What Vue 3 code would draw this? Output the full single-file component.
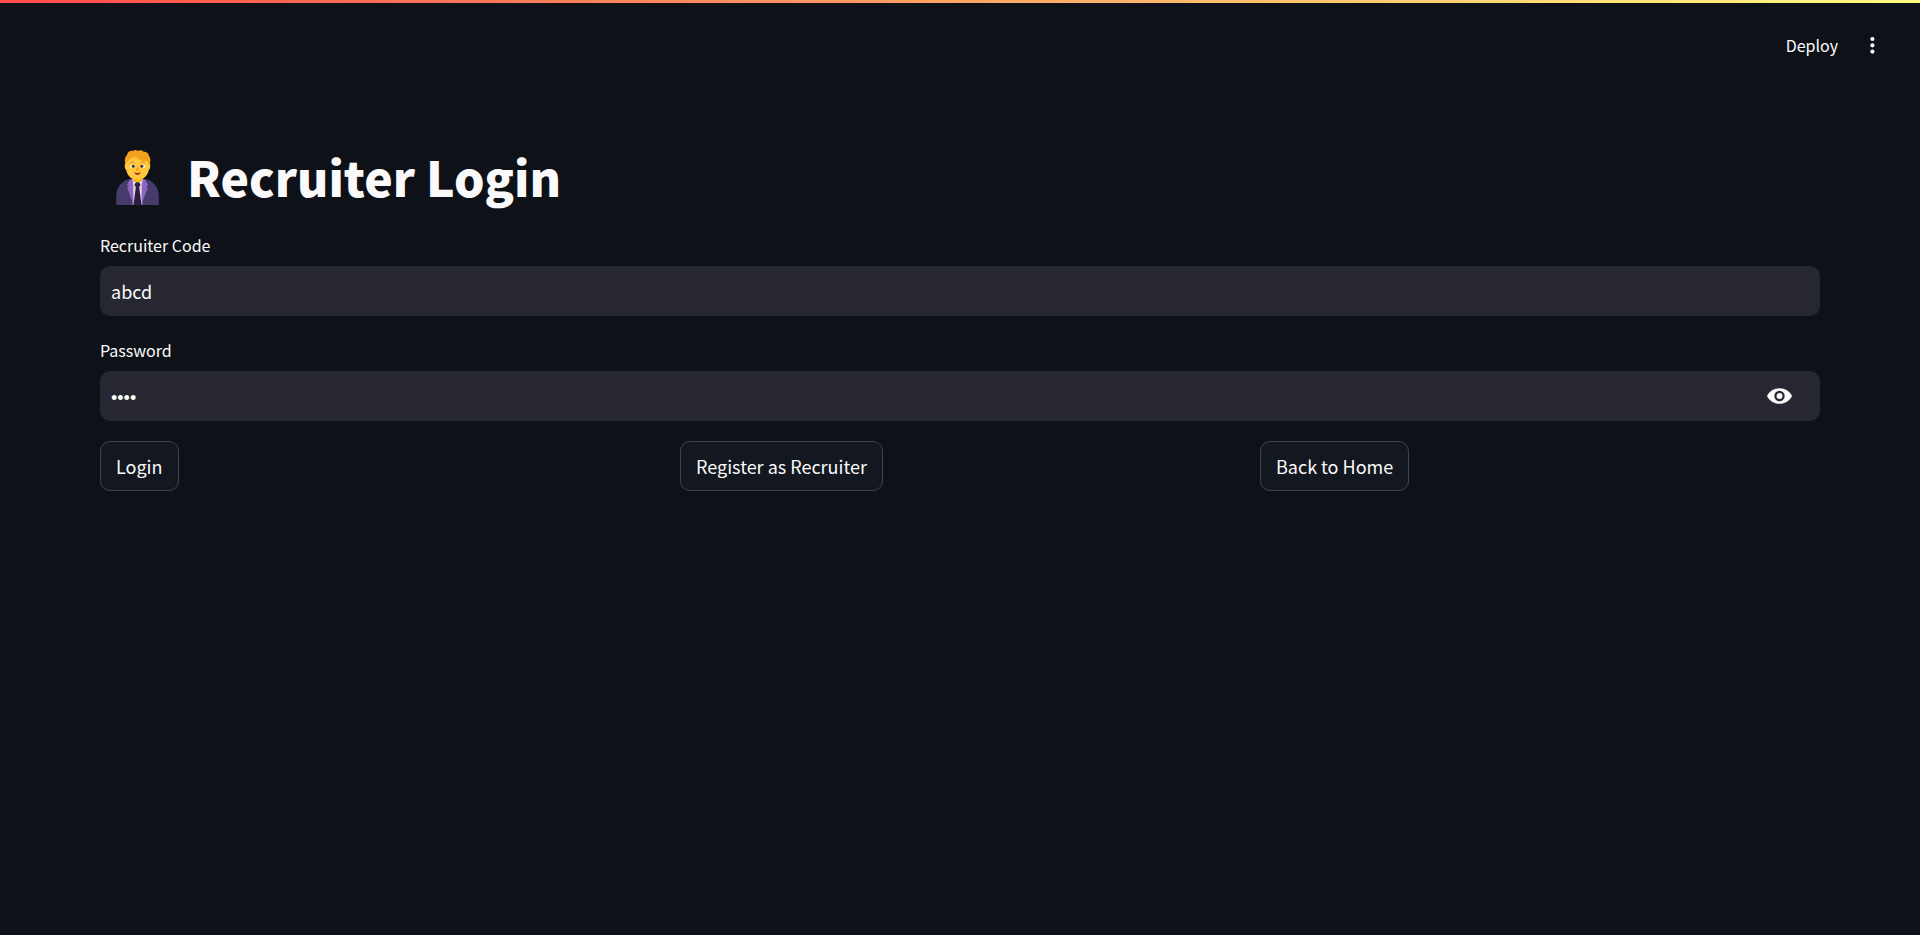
<script setup>
import { ref } from 'vue'

const code = ref('abcd')
const password = ref('abcd')
const visible = ref(false)
</script>

<template>
  <div class="app">
    <div class="decoration"></div>
    <header class="toolbar">
      <button class="deploy" type="button">Deploy</button>
      <button class="menu" type="button" aria-label="Main menu">
        <svg width="20" height="20" viewBox="0 0 20 20" fill="currentColor">
          <circle cx="10.4" cy="4" r="2.1" />
          <circle cx="10.4" cy="10.3" r="2.1" />
          <circle cx="10.4" cy="16.6" r="2.1" />
        </svg>
      </button>
    </header>

    <main class="content">
      <h1 class="title">
        <svg class="emoji" width="43" height="55" viewBox="64 45 128 165" aria-hidden="true">
          <path d="M64 210V184C64 154 84 134 108 132H148C172 134 192 154 192 184V210Z" fill="#463b6b" />
          <path d="M112 131L128 146L145 131L142 210H114Z" fill="#dcd9df" />
          <path d="M112 130L103 137L96 151L102 153L97 158L113 200L115 210H116L115 150Z" fill="#8d65c5" />
          <path d="M144 130L153 137L160 151L154 153L159 158L143 200L141 210H140L141 150Z" fill="#8d65c5" />
          <path d="M114 121H142V133C139 145 117 145 114 133Z" fill="#ffb400" />
          <path d="M121 145L124 143H132L135 145L137 151L133 156L140 210H116L123 156L119 151Z" fill="#321b41" />
          <path d="M93 84C88 84 89 104 94 104C96 119 108 134 128 134C148 134 160 119 162 104C167 104 168 84 163 84V78C160 65 150 57 128 57C106 57 96 65 93 78Z" fill="#ffc83d" />
          <path d="M93 91C88 80 89 66 97 60C97 51 107 46 114 48C119 44 125 45 129 48C135 44 142 45 146 50C155 49 162 55 162 62C168 70 168 82 163 91C162 83 160 79 155 77C142 80 132 76 125 67C111 65 96 75 93 91Z" fill="#f3a01f" />
          <path d="M128 95L123 106Q128 110 133 106Z" fill="#f49b16" />
          <path d="M107 83Q112 79 118 82M138 82Q144 79 149 83" fill="none" stroke="#d67d3b" stroke-width="2.5" stroke-linecap="round" />
          <ellipse cx="113" cy="94" rx="8" ry="5" fill="#fff" />
          <ellipse cx="143" cy="94" rx="8" ry="5" fill="#fff" />
          <circle cx="115" cy="94" r="4.5" fill="#402a32" />
          <circle cx="141" cy="94" r="4.5" fill="#402a32" />
          <path d="M118 112Q128 116 138 112Q136 120 128 120Q120 120 118 112Z" fill="#bc1e2d" />
        </svg>
        <span>Recruiter Login</span>
      </h1>

      <form class="form" @submit.prevent>
        <div class="field">
          <label for="code">Recruiter Code</label>
          <div class="control">
            <input id="code" v-model="code" type="text" autocomplete="off" />
          </div>
        </div>
        <div class="field">
          <label for="password">Password</label>
          <div class="control">
            <input id="password" v-model="password" :type="visible ? 'text' : 'password'" autocomplete="off" />
            <button class="reveal" type="button" aria-label="Show password" @click="visible = !visible">
              <svg width="25" height="16" viewBox="0 0 25 16">
                <path d="M0 8C2.2 3.2 7 .2 12.5 .2S22.8 3.2 25 8C22.8 12.8 18 15.8 12.5 15.8S2.2 12.8 0 8Z" fill="#fafafa" />
                <circle cx="12.5" cy="8" r="4.1" fill="none" stroke="#262730" stroke-width="2.2" />
              </svg>
            </button>
          </div>
        </div>
        <div class="actions">
          <div><button class="action" type="submit">Login</button></div>
          <div><button class="action" type="button">Register as Recruiter</button></div>
          <div><button class="action" type="button">Back to Home</button></div>
        </div>
      </form>
    </main>
  </div>
</template>

<style>
body {
  margin: 0;
  background: #0e1117;
}
</style>

<style scoped>
.app {
  min-height: 100vh;
  background: #0e1117;
  color: #fafafa;
  font-family: "Noto Sans CJK SC", "Noto Sans", sans-serif;
}

.app * {
  box-sizing: border-box;
}

.decoration {
  height: 3px;
  background: linear-gradient(90deg, #ff4b4b, #fffd80);
}

.toolbar {
  display: flex;
  align-items: center;
  justify-content: flex-end;
  gap: 24px;
  height: 84px;
  padding: 0 38px 0 0;
}

button {
  border: 0;
  padding: 0;
  background: none;
  color: inherit;
  font-family: inherit;
  cursor: pointer;
}

svg {
  display: block;
}

.deploy {
  font-size: 16px;
  line-height: 24px;
}

.content {
  padding: 51px 100px 0;
}

.title {
  display: flex;
  align-items: center;
  gap: 28px;
  height: 78px;
  margin: 0;
  padding-left: 16px;
  font-size: 48px;
  line-height: 72px;
  font-weight: 900;
}

.title span {
  padding-bottom: 2px;
}

.form {
  display: flex;
  flex-direction: column;
  gap: 20px;
  padding-top: 15px;
}

.field label {
  display: block;
  height: 35px;
  font-size: 16px;
  line-height: 28px;
}

.control {
  display: flex;
  height: 50px;
  border-radius: 10px;
  background: #262730;
}

.control input {
  flex: 1;
  min-width: 0;
  border: 0;
  outline: 0;
  padding: 0 11px;
  background: transparent;
  color: inherit;
  font-family: inherit;
  font-size: 18px;
}

.control input[type="password"] {
  padding-top: 4px;
  font-family: "Liberation Sans", sans-serif;
}

.reveal {
  padding: 0 28px;
}

.actions {
  display: grid;
  grid-template-columns: repeat(3, 1fr);
  gap: 20px;
}

.action {
  height: 50px;
  padding: 0 15px;
  border: 1px solid #41444c;
  border-radius: 10px;
  background: #13171f;
  font-size: 18px;
}
</style>
